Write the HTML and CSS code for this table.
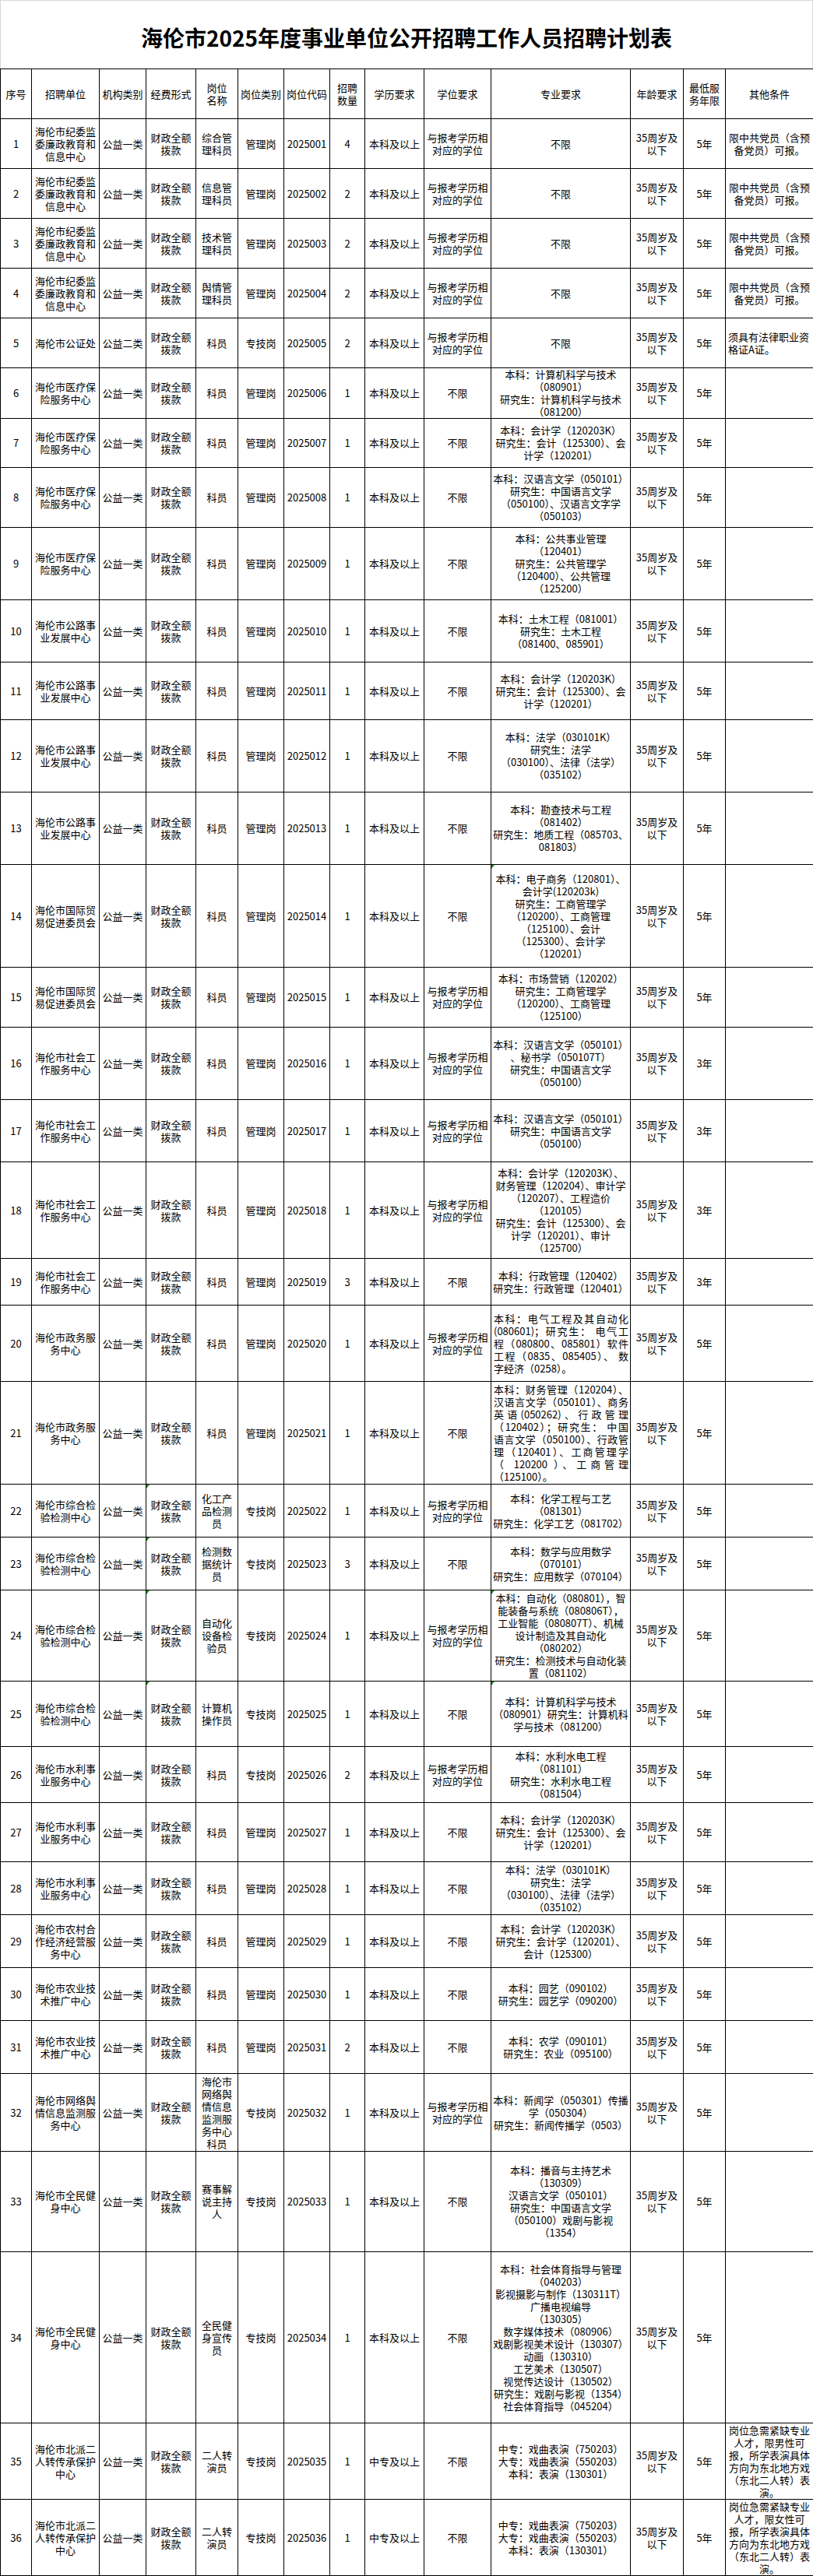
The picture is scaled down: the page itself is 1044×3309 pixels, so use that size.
FILE: index.html
```
<!DOCTYPE html>
<html lang="zh-CN">
<head>
<meta charset="utf-8">
<title>海伦市2025年度事业单位公开招聘工作人员招聘计划表</title>
<link rel="stylesheet" href="styles.css">
</head>
<body>
<div class="sheet">
<div class="title">海伦市2025年度事业单位公开招聘工作人员招聘计划表</div>
<table class="plan">
<colgroup>
<col class="c1"><col class="c2"><col class="c3"><col class="c4"><col class="c5"><col class="c6"><col class="c7"><col class="c8"><col class="c9"><col class="c10"><col class="c11"><col class="c12"><col class="c13"><col class="c14">
</colgroup>
<tbody>
<tr class="h64"><th>序号</th><th>招聘单位</th><th>机构类别</th><th>经费形式</th><th>岗位<br>名称</th><th>岗位类别</th><th>岗位代码</th><th>招聘<br>数量</th><th>学历要求</th><th>学位要求</th><th>专业要求</th><th>年龄要求</th><th>最低服<br>务年限</th><th>其他条件</th></tr>

<tr class="h64"><td>1</td><td>海伦市纪委监<br>委廉政教育和<br>信息中心</td><td>公益一类</td><td>财政全额<br>拨款</td><td>综合管<br>理科员</td><td>管理岗</td><td>2025001</td><td>4</td><td>本科及以上</td><td>与报考学历相<br>对应的学位</td><td>不限</td><td>35周岁及<br>以下</td><td>5年</td><td>限中共党员（含预<br>备党员）可报。</td></tr>
<tr class="h64"><td>2</td><td>海伦市纪委监<br>委廉政教育和<br>信息中心</td><td>公益一类</td><td>财政全额<br>拨款</td><td>信息管<br>理科员</td><td>管理岗</td><td>2025002</td><td>2</td><td>本科及以上</td><td>与报考学历相<br>对应的学位</td><td>不限</td><td>35周岁及<br>以下</td><td>5年</td><td>限中共党员（含预<br>备党员）可报。</td></tr>
<tr class="h64"><td>3</td><td>海伦市纪委监<br>委廉政教育和<br>信息中心</td><td>公益一类</td><td>财政全额<br>拨款</td><td>技术管<br>理科员</td><td>管理岗</td><td>2025003</td><td>2</td><td>本科及以上</td><td>与报考学历相<br>对应的学位</td><td>不限</td><td>35周岁及<br>以下</td><td>5年</td><td>限中共党员（含预<br>备党员）可报。</td></tr>
<tr class="h64"><td>4</td><td>海伦市纪委监<br>委廉政教育和<br>信息中心</td><td>公益一类</td><td>财政全额<br>拨款</td><td>舆情管<br>理科员</td><td>管理岗</td><td>2025004</td><td>2</td><td>本科及以上</td><td>与报考学历相<br>对应的学位</td><td>不限</td><td>35周岁及<br>以下</td><td>5年</td><td>限中共党员（含预<br>备党员）可报。</td></tr>
<tr class="h64"><td>5</td><td>海伦市公证处</td><td>公益二类</td><td>财政全额<br>拨款</td><td>科员</td><td>专技岗</td><td>2025005</td><td>2</td><td>本科及以上</td><td>与报考学历相<br>对应的学位</td><td>不限</td><td>35周岁及<br>以下</td><td>5年</td><td class="left">须具有法律职业资<br>格证A证。</td></tr>
<tr class="h65"><td>6</td><td>海伦市医疗保<br>险服务中心</td><td>公益一类</td><td>财政全额<br>拨款</td><td>科员</td><td>管理岗</td><td>2025006</td><td>1</td><td>本科及以上</td><td>不限</td><td>本科：计算机科学与技术<br>（080901）<br>研究生：计算机科学与技术<br>（081200）</td><td>35周岁及<br>以下</td><td>5年</td><td></td></tr>
<tr class="h63"><td>7</td><td>海伦市医疗保<br>险服务中心</td><td>公益一类</td><td>财政全额<br>拨款</td><td>科员</td><td>管理岗</td><td>2025007</td><td>1</td><td>本科及以上</td><td>不限</td><td>本科：会计学（120203K）<br>研究生：会计（125300）、会<br>计学（120201）</td><td>35周岁及<br>以下</td><td>5年</td><td></td></tr>
<tr class="h77"><td>8</td><td>海伦市医疗保<br>险服务中心</td><td>公益一类</td><td>财政全额<br>拨款</td><td>科员</td><td>管理岗</td><td>2025008</td><td>1</td><td>本科及以上</td><td>不限</td><td>本科：汉语言文学（050101）<br>研究生：中国语言文学<br>（050100）、汉语言文字学<br>（050103）</td><td>35周岁及<br>以下</td><td>5年</td><td></td></tr>
<tr class="h93"><td>9</td><td>海伦市医疗保<br>险服务中心</td><td>公益一类</td><td>财政全额<br>拨款</td><td>科员</td><td>管理岗</td><td>2025009</td><td>1</td><td>本科及以上</td><td>不限</td><td>本科：公共事业管理<br>（120401）<br>研究生：公共管理学<br>（120400）、公共管理<br>（125200）</td><td>35周岁及<br>以下</td><td>5年</td><td></td></tr>
<tr class="h80"><td>10</td><td>海伦市公路事<br>业发展中心</td><td>公益一类</td><td>财政全额<br>拨款</td><td>科员</td><td>管理岗</td><td>2025010</td><td>1</td><td>本科及以上</td><td>不限</td><td>本科：土木工程（081001）<br>研究生：土木工程<br>（081400、085901）</td><td>35周岁及<br>以下</td><td>5年</td><td></td></tr>
<tr class="h74"><td>11</td><td>海伦市公路事<br>业发展中心</td><td>公益一类</td><td>财政全额<br>拨款</td><td>科员</td><td>管理岗</td><td>2025011</td><td>1</td><td>本科及以上</td><td>不限</td><td>本科：会计学（120203K）<br>研究生：会计（125300）、会<br>计学（120201）</td><td>35周岁及<br>以下</td><td>5年</td><td></td></tr>
<tr class="h93"><td>12</td><td>海伦市公路事<br>业发展中心</td><td>公益一类</td><td>财政全额<br>拨款</td><td>科员</td><td>管理岗</td><td>2025012</td><td>1</td><td>本科及以上</td><td>不限</td><td>本科：法学（030101K）<br>研究生：法学<br>（030100）、法律（法学）<br>（035102）</td><td>35周岁及<br>以下</td><td>5年</td><td></td></tr>
<tr class="h93"><td>13</td><td>海伦市公路事<br>业发展中心</td><td>公益一类</td><td>财政全额<br>拨款</td><td>科员</td><td>管理岗</td><td>2025013</td><td>1</td><td>本科及以上</td><td>不限</td><td>本科：勘查技术与工程<br>（081402）<br>研究生：地质工程（085703、<br>081803）</td><td>35周岁及<br>以下</td><td>5年</td><td></td></tr>
<tr class="h132"><td>14</td><td>海伦市国际贸<br>易促进委员会</td><td>公益一类</td><td>财政全额<br>拨款</td><td>科员</td><td>管理岗</td><td>2025014</td><td>1</td><td>本科及以上</td><td>不限</td><td class="flag">本科：电子商务（120801）、<br>会计学(120203k)<br>研究生：工商管理学<br>（120200）、工商管理<br>（125100）、会计<br>（125300）、会计学<br>（120201）</td><td>35周岁及<br>以下</td><td>5年</td><td></td></tr>
<tr class="h77"><td>15</td><td>海伦市国际贸<br>易促进委员会</td><td>公益一类</td><td>财政全额<br>拨款</td><td>科员</td><td>管理岗</td><td>2025015</td><td>1</td><td>本科及以上</td><td>与报考学历相<br>对应的学位</td><td>本科：市场营销（120202）<br>研究生：工商管理学<br>（120200）、工商管理<br>（125100）</td><td>35周岁及<br>以下</td><td>5年</td><td></td></tr>
<tr class="h93"><td>16</td><td>海伦市社会工<br>作服务中心</td><td>公益一类</td><td>财政全额<br>拨款</td><td>科员</td><td>管理岗</td><td>2025016</td><td>1</td><td>本科及以上</td><td>与报考学历相<br>对应的学位</td><td>本科：汉语言文学（050101）<br>、秘书学（050107T）<br>研究生：中国语言文学<br>（050100）</td><td>35周岁及<br>以下</td><td>3年</td><td></td></tr>
<tr class="h80"><td>17</td><td>海伦市社会工<br>作服务中心</td><td>公益一类</td><td>财政全额<br>拨款</td><td>科员</td><td>管理岗</td><td>2025017</td><td>1</td><td>本科及以上</td><td>与报考学历相<br>对应的学位</td><td>本科：汉语言文学（050101）<br>研究生：中国语言文学<br>（050100）</td><td>35周岁及<br>以下</td><td>3年</td><td></td></tr>
<tr class="h124"><td>18</td><td>海伦市社会工<br>作服务中心</td><td>公益一类</td><td>财政全额<br>拨款</td><td>科员</td><td>管理岗</td><td>2025018</td><td>1</td><td>本科及以上</td><td>与报考学历相<br>对应的学位</td><td>本科：会计学（120203K）、<br>财务管理（120204）、审计学<br>（120207）、工程造价<br>（120105）<br>研究生：会计（125300）、会<br>计学（120201）、审计<br>（125700）</td><td>35周岁及<br>以下</td><td>3年</td><td></td></tr>
<tr class="h60"><td>19</td><td>海伦市社会工<br>作服务中心</td><td>公益一类</td><td>财政全额<br>拨款</td><td>科员</td><td>管理岗</td><td>2025019</td><td>3</td><td>本科及以上</td><td>不限</td><td>本科：行政管理（120402）<br>研究生：行政管理（120401）</td><td>35周岁及<br>以下</td><td>3年</td><td></td></tr>
<tr class="h98"><td>20</td><td>海伦市政务服<br>务中心</td><td>公益一类</td><td>财政全额<br>拨款</td><td>科员</td><td>管理岗</td><td>2025020</td><td>1</td><td>本科及以上</td><td>与报考学历相<br>对应的学位</td><td class="just"><span class="jl">本科：电气工程及其自动化</span><span class="jl">(080601)；研究生： 电气工</span><span class="jl">程（080800、085801）软件</span><span class="jl">工程（0835、085405）、 数</span><span class="je">字经济（0258）。</span></td><td>35周岁及<br>以下</td><td>5年</td><td></td></tr>
<tr class="h132"><td>21</td><td>海伦市政务服<br>务中心</td><td>公益一类</td><td>财政全额<br>拨款</td><td>科员</td><td>管理岗</td><td>2025021</td><td>1</td><td>本科及以上</td><td>不限</td><td class="just"><span class="jl">本科：财务管理（120204）、</span><span class="jl">汉语言文学（050101）、商务</span><span class="jl">英语(050262)、行政管理</span><span class="jl">（120402）；研究生： 中国</span><span class="jl">语言文学（050100）、行政管</span><span class="jl">理（120401）、工商管理学</span><span class="jl">（ 120200 ）、工商管理</span><span class="je">（125100）。</span></td><td>35周岁及<br>以下</td><td>5年</td><td></td></tr>
<tr class="h68"><td>22</td><td>海伦市综合检<br>验检测中心</td><td>公益一类</td><td class="flag">财政全额<br>拨款</td><td>化工产<br>品检测<br>员</td><td>专技岗</td><td>2025022</td><td>1</td><td>本科及以上</td><td>与报考学历相<br>对应的学位</td><td>本科：化学工程与工艺<br>（081301）<br>研究生：化学工艺（081702）</td><td>35周岁及<br>以下</td><td>5年</td><td></td></tr>
<tr class="h68"><td>23</td><td>海伦市综合检<br>验检测中心</td><td>公益一类</td><td class="flag">财政全额<br>拨款</td><td>检测数<br>据统计<br>员</td><td>专技岗</td><td>2025023</td><td>3</td><td>本科及以上</td><td>不限</td><td>本科：数学与应用数学<br>（070101）<br>研究生：应用数学（070104）</td><td>35周岁及<br>以下</td><td>5年</td><td></td></tr>
<tr class="h117"><td>24</td><td>海伦市综合检<br>验检测中心</td><td>公益一类</td><td class="flag">财政全额<br>拨款</td><td>自动化<br>设备检<br>验员</td><td>专技岗</td><td>2025024</td><td>1</td><td>本科及以上</td><td>与报考学历相<br>对应的学位</td><td class="flag">本科：自动化（080801），智<br>能装备与系统（080806T），<br>工业智能（080807T）、机械<br>设计制造及其自动化<br>（080202）<br>研究生：检测技术与自动化装<br>置（081102）</td><td>35周岁及<br>以下</td><td>5年</td><td></td></tr>
<tr class="h84"><td>25</td><td>海伦市综合检<br>验检测中心</td><td>公益一类</td><td class="flag">财政全额<br>拨款</td><td>计算机<br>操作员</td><td>专技岗</td><td>2025025</td><td>1</td><td>本科及以上</td><td>不限</td><td class="flag">本科：计算机科学与技术<br>（080901）研究生：计算机科<br>学与技术（081200）</td><td>35周岁及<br>以下</td><td>5年</td><td></td></tr>
<tr class="h72"><td>26</td><td>海伦市水利事<br>业服务中心</td><td>公益一类</td><td>财政全额<br>拨款</td><td>科员</td><td>专技岗</td><td>2025026</td><td>2</td><td>本科及以上</td><td>与报考学历相<br>对应的学位</td><td>本科：水利水电工程<br>（081101）<br>研究生：水利水电工程<br>（081504）</td><td>35周岁及<br>以下</td><td>5年</td><td></td></tr>
<tr class="h76"><td>27</td><td>海伦市水利事<br>业服务中心</td><td>公益一类</td><td>财政全额<br>拨款</td><td>科员</td><td>管理岗</td><td>2025027</td><td>1</td><td>本科及以上</td><td>不限</td><td>本科：会计学（120203K）<br>研究生：会计（125300）、会<br>计学（120201）</td><td>35周岁及<br>以下</td><td>5年</td><td></td></tr>
<tr class="h68"><td>28</td><td>海伦市水利事<br>业服务中心</td><td>公益一类</td><td>财政全额<br>拨款</td><td>科员</td><td>管理岗</td><td>2025028</td><td>1</td><td>本科及以上</td><td>不限</td><td>本科：法学（030101K）<br>研究生：法学<br>（030100）、法律（法学）<br>（035102）</td><td>35周岁及<br>以下</td><td>5年</td><td></td></tr>
<tr class="h68"><td>29</td><td>海伦市农村合<br>作经济经营服<br>务中心</td><td>公益一类</td><td>财政全额<br>拨款</td><td>科员</td><td>管理岗</td><td>2025029</td><td>1</td><td>本科及以上</td><td>不限</td><td>本科：会计学（120203K）<br>研究生：会计学（120201）、<br>会计（125300）</td><td>35周岁及<br>以下</td><td>5年</td><td></td></tr>
<tr class="h68"><td>30</td><td>海伦市农业技<br>术推广中心</td><td>公益一类</td><td>财政全额<br>拨款</td><td>科员</td><td>管理岗</td><td>2025030</td><td>1</td><td>本科及以上</td><td>不限</td><td>本科：园艺（090102）<br>研究生：园艺学（090200）</td><td>35周岁及<br>以下</td><td>5年</td><td></td></tr>
<tr class="h68"><td>31</td><td>海伦市农业技<br>术推广中心</td><td>公益一类</td><td>财政全额<br>拨款</td><td>科员</td><td>管理岗</td><td>2025031</td><td>2</td><td>本科及以上</td><td>不限</td><td>本科：农学（090101）<br>研究生：农业（095100）</td><td>35周岁及<br>以下</td><td>5年</td><td></td></tr>
<tr class="h100"><td>32</td><td>海伦市网络舆<br>情信息监测服<br>务中心</td><td>公益一类</td><td>财政全额<br>拨款</td><td>海伦市<br>网络舆<br>情信息<br>监测服<br>务中心<br>科员</td><td>专技岗</td><td>2025032</td><td>1</td><td>本科及以上</td><td>与报考学历相<br>对应的学位</td><td>本科：新闻学（050301）传播<br>学（050304）<br>研究生：新闻传播学（0503）</td><td>35周岁及<br>以下</td><td>5年</td><td></td></tr>
<tr class="h129"><td>33</td><td>海伦市全民健<br>身中心</td><td>公益一类</td><td>财政全额<br>拨款</td><td>赛事解<br>说主持<br>人</td><td>专技岗</td><td>2025033</td><td>1</td><td>本科及以上</td><td>不限</td><td>本科：播音与主持艺术<br>（130309）<br>汉语言文学（050101）<br>研究生：中国语言文学<br>（050100）戏剧与影视<br>（1354）</td><td>35周岁及<br>以下</td><td>5年</td><td></td></tr>
<tr class="h220"><td>34</td><td>海伦市全民健<br>身中心</td><td>公益一类</td><td>财政全额<br>拨款</td><td>全民健<br>身宣传<br>员</td><td>专技岗</td><td>2025034</td><td>1</td><td>本科及以上</td><td>不限</td><td>本科：社会体育指导与管理<br>（040203）<br>影视摄影与制作（130311T）<br>广播电视编导<br>（130305）<br>数字媒体技术（080906）<br>戏剧影视美术设计（130307）<br>动画（130310）<br>工艺美术（130507）<br>视觉传达设计（130502）<br>研究生：戏剧与影视（1354）<br>社会体育指导（045204）</td><td>35周岁及<br>以下</td><td>5年</td><td></td></tr>
<tr class="h98"><td>35</td><td>海伦市北派二<br>人转传承保护<br>中心</td><td>公益一类</td><td>财政全额<br>拨款</td><td>二人转<br>演员</td><td>专技岗</td><td>2025035</td><td>1</td><td>中专及以上</td><td>不限</td><td>中专：戏曲表演（750203）<br>大专：戏曲表演（550203）<br>本科：表演（130301）</td><td>35周岁及<br>以下</td><td>5年</td><td>岗位急需紧缺专业<br>人才，限男性可<br>报，所学表演具体<br>方向为东北地方戏<br>（东北二人转）表<br>演。</td></tr>
<tr class="h98"><td>36</td><td>海伦市北派二<br>人转传承保护<br>中心</td><td>公益一类</td><td>财政全额<br>拨款</td><td>二人转<br>演员</td><td>专技岗</td><td>2025036</td><td>1</td><td>中专及以上</td><td>不限</td><td>中专：戏曲表演（750203）<br>大专：戏曲表演（550203）<br>本科：表演（130301）</td><td>35周岁及<br>以下</td><td>5年</td><td>岗位急需紧缺专业<br>人才，限女性可<br>报，所学表演具体<br>方向为东北地方戏<br>（东北二人转）表<br>演。</td></tr>
</tbody>
</table>
</div>
</body>
</html>
```
FILE: styles.css
```
html, body {
  margin: 0;
  padding: 0;
  background: #ffffff;
}

body {
  font-family: "Noto Sans CJK SC", "Noto Sans", sans-serif;
  color: #000000;
}

.sheet {
  width: 1044px;
}

.title {
  height: 88px;
  box-sizing: border-box;
  border: 1px solid #d6d6d6;
  border-bottom: none;
  display: flex;
  align-items: center;
  justify-content: center;
  padding-top: 6px;
  font-size: 28px;
  font-weight: 700;
  line-height: 1;
  white-space: nowrap;
}

.plan {
  width: 1044px;
  border-collapse: collapse;
  table-layout: fixed;
  font-size: 13px;
  line-height: 16px;
}

.plan th,
.plan td {
  border: 1px solid #000000;
  padding: 0 2px;
  text-align: center;
  vertical-align: middle;
  white-space: nowrap;
  font-weight: 400;
  overflow: visible;
}

.c1 { width: 40px; }
.c2 { width: 87px; }
.c3 { width: 60px; }
.c4 { width: 64px; }
.c5 { width: 54px; }
.c6 { width: 59px; }
.c7 { width: 59px; }
.c8 { width: 45px; }
.c9 { width: 76px; }
.c10 { width: 86px; }
.c11 { width: 179px; }
.c12 { width: 68px; }
.c13 { width: 54px; }
.c14 { width: 113px; }

.h60 { height: 60px; }
.h63 { height: 63px; }
.h64 { height: 64px; }
.h65 { height: 65px; }
.h68 { height: 68px; }
.h72 { height: 72px; }
.h74 { height: 74px; }
.h76 { height: 76px; }
.h77 { height: 77px; }
.h80 { height: 80px; }
.h84 { height: 84px; }
.h93 { height: 93px; }
.h98 { height: 98px; }
.h100 { height: 100px; }
.h117 { height: 117px; }
.h124 { height: 124px; }
.h129 { height: 129px; }
.h132 { height: 132px; }
.h220 { height: 220px; }

.plan td.left {
  text-align: left;
  padding-left: 3px;
}

.plan td.just {
  text-align: left;
  padding: 0 2px 0 3px;
}

.jl {
  display: block;
  text-align: justify;
  text-align-last: justify;
}

.je {
  display: block;
  text-align: left;
}

.plan td.flag {
  position: relative;
}

.plan td.flag::before {
  content: "";
  position: absolute;
  top: 0;
  left: 0;
  border-top: 5px solid #1f8a1f;
  border-right: 4px solid transparent;
}
```
